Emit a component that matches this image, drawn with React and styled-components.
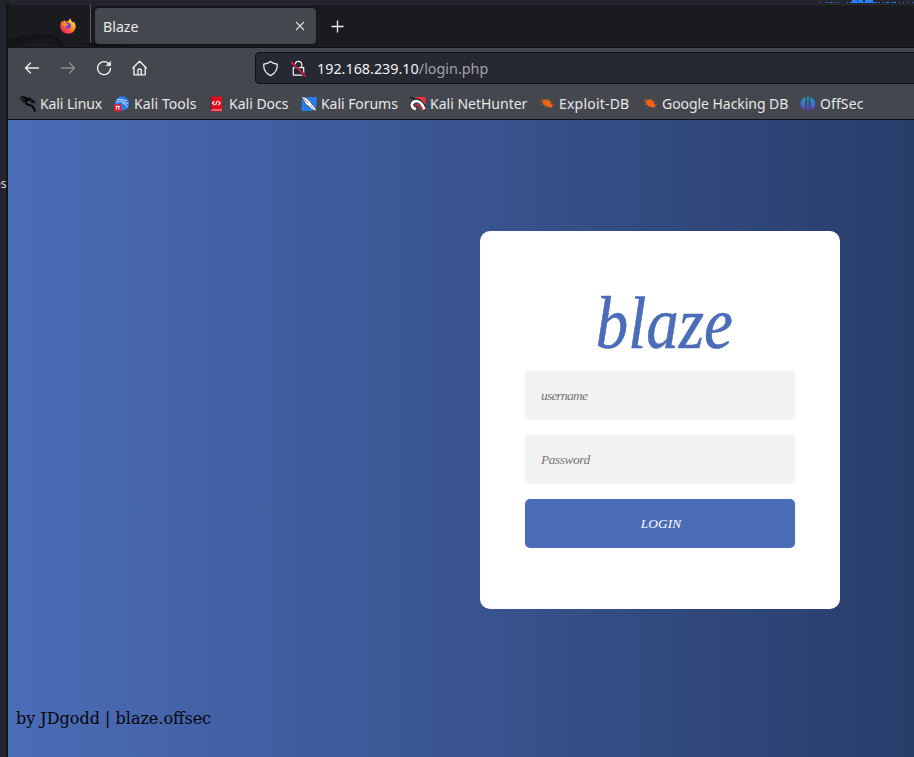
import React from "react";
import styled, { createGlobalStyle } from "styled-components";

const Global = createGlobalStyle`
  * { box-sizing: border-box; }
  body { margin: 0; overflow: hidden; background: #22242d; font-family: "Noto Sans", sans-serif; }
`;

const Desktop = styled.div`
  position: relative;
  width: 914px;
  height: 757px;
  overflow: hidden;
  display: flex;
  padding: 4px 0 0 7px;
  background: linear-gradient(90deg, #23252e 0 5px, #14151a 7px);
`;
const TopStrip = styled.div`
  position: absolute;
  left: 0;
  top: 0;
  width: 914px;
  height: 4px;
  background: linear-gradient(#252630, #202129);
  svg { display: block; }
`;
const Behind = styled.span`
  position: absolute;
  left: -6px;
  top: 176px;
  color: #d8d9dc;
  font: 12px/16px "Noto Sans", sans-serif;
`;
const Window = styled.div`
  position: relative;
  flex: 1;
  min-width: 0;
  display: flex;
  flex-direction: column;
  border-left: 1px solid #101116;
  border-top: 1px solid #2b2c31;
  border-top-left-radius: 6px;
  overflow: hidden;
  background: #1a1b1f;
`;
const TabStrip = styled.div`
  height: 43px;
  flex: none;
  display: flex;
  position: relative;
  border-bottom: 1px solid #121317;
`;
const Pinned = styled.div`
  width: 83px;
  flex: none;
  display: flex;
  align-items: center;
  justify-content: flex-end;
  padding-right: 14px;
  border-right: 1px solid #55575d;
`;
const Backdrop = styled.svg`
  position: absolute;
  left: 0;
  top: 0;
`;
const FoxSvg = styled.svg`
  position: relative;
`;
const Tab = styled.div`
  position: relative;
  width: 221px;
  height: 36px;
  margin: 3px 0 0 4px;
  padding: 0 11px 0 8px;
  border-radius: 4px;
  background: #44474d;
  box-shadow: 0 0 2px #0009;
  display: flex;
  align-items: center;
  justify-content: space-between;
  color: #e8e9e9;
  font-size: 14.2px;
`;
const NewTab = styled.div`
  margin: 14px 0 0 14px;
  height: 15px;
  svg { display: block; }
`;
const NavBar = styled.div`
  height: 40px;
  flex: none;
  display: flex;
  align-items: center;
  background: #44474d;
  padding-left: 15px;
`;
const NavButton = styled.div`
  width: 18px;
  height: 18px;
  margin-right: 18px;
  opacity: ${(p) => (p.$dim ? 0.42 : 1)};
  svg { display: block; }
`;
const UrlBar = styled.div`
  width: 680px;
  flex: none;
  height: 32px;
  margin-left: 88px;
  display: flex;
  align-items: center;
  padding-left: 6px;
  border: 1px solid #101116;
  border-radius: 4px;
  background: #262832;
  font-size: 14.35px;
  color: #f2f2f2;
  svg { flex: none; margin-right: 11px; }
  svg + span { margin-left: -1px; }
`;
const UrlPath = styled.span`
  color: #a2a3a8;
`;
const Bookmarks = styled.div`
  height: 32px;
  flex: none;
  display: flex;
  align-items: center;
  padding: 0 0 0 12px;
  background: #44474d;
  border-bottom: 1px solid #101114;
`;
const Bookmark = styled.div`
  width: ${(p) => p.$width}px;
  flex: none;
  display: flex;
  align-items: center;
  gap: 4px;
  white-space: nowrap;
  color: #e6e7e7;
  font-size: 14px;
  letter-spacing: ${(p) => p.$spacing || 0}px;
  svg { flex: none; }
`;
const Viewport = styled.main`
  flex: 1;
  min-height: 0;
  overflow: hidden;
`;
const Page = styled.div`
  width: 1304px;
  height: 100%;
  display: flex;
  flex-direction: column;
  align-items: center;
  justify-content: space-between;
  padding: 111px 0 26px;
  background: linear-gradient(90deg, #4b6cb7, #182848);
`;
const Card = styled.form`
  width: 360px;
  height: 378px;
  padding: 60px 45px 45px;
  border-radius: 10px;
  background: #fff;
  display: flex;
  flex-direction: column;
  gap: 15px;
  font-family: "Z003", "URW Chancery L", "Liberation Serif", serif;
  font-style: italic;
`;
const Logo = styled.h1`
  margin: 0 0 -15px;
  padding-left: 10px;
  height: 80px;
  font-size: 75px;
  line-height: 64px;
  font-weight: 400;
  text-align: center;
  color: #4b6cb7;
  -webkit-text-stroke: 0.6px #4b6cb7;
  transform: scaleX(0.865);
`;
const Field = styled.input`
  width: 270px;
  height: 49px;
  padding: 0 16px;
  border: 0;
  border-radius: 5px;
  background: #f2f2f2;
  font: inherit;
  font-size: 13.3px;
  letter-spacing: ${(p) => p.$spacing}px;
  &::placeholder { color: #757575; opacity: 1; }
`;
const Submit = styled.button`
  width: 270px;
  height: 49px;
  padding: 0 0 0 2px;
  border: 0;
  border-radius: 5px;
  background: #4b6cb7;
  color: #fff;
  font: inherit;
  font-size: 13.3px;
  letter-spacing: 0.1px;
`;
const Footer = styled.footer`
  align-self: flex-start;
  padding-left: 8px;
  color: #05060a;
  font: 16px/24px "DejaVu Serif", serif;
`;

const Line = ({ size = 18, children }) => (
  <svg width={size} height={size} viewBox="0 0 18 18" fill="none" stroke="#f0f0ee" strokeWidth="1.35" strokeLinecap="round" strokeLinejoin="round">
    {children}
  </svg>
);

const Firefox = () => (
  <FoxSvg width="16" height="16" viewBox="0 0 16 16">
    <defs>
      <linearGradient id="fox" x1="1" y1="0" x2="0.2" y2="1">
        <stop offset="0" stopColor="#fff44f" />
        <stop offset="0.4" stopColor="#ffae20" />
        <stop offset="0.7" stopColor="#ff5634" />
        <stop offset="1" stopColor="#e51a75" />
      </linearGradient>
    </defs>
    <path d="M1.7 3 2.8 4.2 4 1.9 5.4 3.5 7.2 3.5 8.5 2.7 10.4.3 11.4 3 13 4.6 13.7 3.6Q16 6.3 15.7 9C15.1 13.2 12 15.8 8 15.8S.8 13 .3 8.8C.1 6.5.8 4.5 1.7 3Z" fill="url(#fox)" />
    <path d="M5.5 4.7Q8.8 3.4 11 6.4 11.7 9.9 8.6 11.1 5.2 11 4.9 8.1L7 7.1 8.4 6 6.3 5.8Z" fill="#8043d5" />
    <path d="M2.9 6.1Q4.4 4.4 5.9 5.7L8.3 6.2 6.8 7.3 5.2 8.8Z" fill="#ff9c26" />
  </FoxSvg>
);

const KaliIcon = () => (
  <svg width="16" height="16" viewBox="0 0 16 16" fill="none" stroke="#08090b" strokeLinecap="round" strokeLinejoin="round">
    <path d="M.5 1.2 4.2.9 7.6 2.3 11 2.3M.9 3.6 4.6 2.5 8.4 3.2" strokeWidth="1.2" />
    <path d="M2.8 5.6Q5.4 3.9 9 3.8L12.4 4.4 14.6 6.4 11.6 6" strokeWidth="1.5" />
    <path d="M7.8 4C4.4 6 5.6 8.8 9.5 9 12.6 9.4 13.8 11 14.8 14.8" strokeWidth="2.1" />
  </svg>
);
const ToolsIcon = () => (
  <svg width="16" height="16" viewBox="0 0 16 16">
    <circle cx="8.1" cy="7.4" r="7.1" fill="#287cf0" />
    <path d="M2.5 4.2Q6 2.2 9.2 4L13 4.8M2 6.6Q5 4.6 8.2 5.2M8 5.4C7 8 12.5 7 13.6 11.5M9 5.8 14 7.6" fill="none" stroke="#cfe6ff" strokeWidth=".9" />
    <rect x="0" y="8" width="7.3" height="7.6" rx="2.2" fill="#ed1c2d" />
    <path d="M1.7 10.4H5.6M2.6 10V13.5M4.9 10V13.5" stroke="#fff" strokeWidth="1" />
  </svg>
);
const DocsIcon = () => (
  <svg width="16" height="16" viewBox="0 0 16 16">
    <path d="M1.4.5H13V15.4H2.5Q1.2 15.4 1.2 14Z" fill="#db1018" />
    <path d="M1.7 1V14.5" stroke="#263865" strokeWidth="1.1" />
    <path d="M2.2 13.4H13V14.4H2.5" fill="#e9b8bc" />
    <path d="m5.4 5.2-1.9 1.9 1.9 1.9M9.2 5.2l1.9 1.9L9.2 9M8 5.1 6.6 9.1" fill="none" stroke="#fff" strokeWidth="1.1" />
  </svg>
);
const ForumsIcon = () => (
  <svg width="16" height="16" viewBox="0 0 16 16">
    <path d="M1 1H14.7Q16 1 15.9 2.5L15.2 12.8 11 15H2Q.5 15 .5 13.4Z" fill="#267cf4" />
    <path d="M.2.6 5 1.6 9.4 5.6 11.2 8.4 14.2 11.8 15.8 15.5 10.6 13.2 8 10.6 4.8 8.6 2.8 4.6Z" fill="#fff" stroke="#20232b" strokeWidth=".6" />
    <path d="m2.6 2.6 4.8 4.8M9 8.8l3.6 4" stroke="#7c8390" strokeWidth=".8" />
  </svg>
);
const HunterIcon = () => (
  <svg width="16" height="16" viewBox="0 0 16 16">
    <path d="M5 1H15.6L15 12.8 10 8Z" fill="#f0303b" />
    <path d="M.2 1.2 3.5 2.6 9 4.2" fill="none" stroke="#1b1d22" strokeWidth="1.3" />
    <path d="M3.4 12C-.3 7.3 5 3 9.6 5.4 12.6 7 13.4 10 15.4 14" fill="none" stroke="#20232b" strokeWidth="4" />
    <path d="M5.8 13.3C-1 10.5 2 4.6 7.4 5.2 11 5.6 12.6 9 14.6 13.4" fill="none" stroke="#fff" strokeWidth="2.6" />
    <path d="M5 10.2Q7.4 7 9.4 10.6L12.6 14.4" fill="none" stroke="#df2b3c" strokeWidth="1.5" />
  </svg>
);
const ExploitIcon = () => (
  <svg width="16" height="16" viewBox="0 0 16 16">
    <path d="M3.4 4.6 6.4 3.6Q9.4 3.2 11.4 5.6L12.4 8 13.8 9.6 13 11.2Q10.6 12 8 10.8L4 8Z" fill="#ed6516" />
    <path d="m.9 4.4 3.7 1.4M2.4 2.6 5.6 4.6M9.6 2.4l.6 2.2M11.5 6l2.2-.6M4.4 8l-2.3 1M6.8 10 5.4 11.8M12.8 9l2.5-.6" stroke="#cf5d22" strokeWidth=".6" fill="none" />
  </svg>
);
const OffSecIcon = () => (
  <svg width="16" height="16" viewBox="0 0 16 16">
    <defs><linearGradient id="off" x1="0" x2="0" y1="0" y2="1"><stop stopColor="#13a8cb" /><stop offset=".6" stopColor="#4267d7" /><stop offset="1" stopColor="#6e20c6" /></linearGradient></defs>
    <path d="M5.4 1V14.2Q1 12.4.6 8C.5 4.8 2.4 2.4 5.4 1ZM7.2.5H8.7V15.5H7.2ZM10.5 1Q15 3.1 15.3 7.8 15.2 12.3 10.5 14.2Z" fill="url(#off)" />
  </svg>
);

const bookmarks = [
  ["Kali Linux", 94, KaliIcon, -0.1],
  ["Kali Tools", 95, ToolsIcon, 0.1],
  ["Kali Docs", 92, DocsIcon, 0],
  ["Kali Forums", 109, ForumsIcon, -0.05],
  ["Kali NetHunter", 129, HunterIcon, 0],
  ["Exploit-DB", 103, ExploitIcon, 0.2],
  ["Google Hacking DB", 158, ExploitIcon, -0.05],
  ["OffSec", 70, OffSecIcon, 0.1],
];

const specks = [29, 35, 37, 40, 41, 43, 45, 48, 57, 87, 89, 93, 96, 97, 98, 101, 103, 104, 105, 109, 113, 118, 122];

export default function App() {
  return (
    <Desktop>
      <Global />
      <TopStrip>
        <svg width="914" height="4" fill="#2b7df4">
          <path d="M852 0H857V1H858V0H863V2H865V0H873V2H876V3H850V2H852Z" />
          {specks.map((x) => <rect key={x} x={790 + x} y="2" width="1" height="1" />)}
        </svg>
      </TopStrip>
      <Behind>es</Behind>
      <Window>
        <TabStrip>
          <Backdrop width="150" height="43">
            <path d="M0 34Q23 28 49 30L57 43H52L44 34Q24 33 0 41ZM76 38Q104 36 125 43H84Z" fill="#131418" />
            <path d="M0 42Q22 36 43 37L47 42" fill="none" stroke="#15161a" strokeWidth="2" />
          </Backdrop>
          <Pinned><Firefox /></Pinned>
          <Tab>
            Blaze
            <svg width="10" height="10" viewBox="0 0 10 10" stroke="#ddd" strokeWidth="1.1"><path d="m1 1 8 8M9 1 1 9" /></svg>
          </Tab>
          <NewTab><svg width="15" height="15" stroke="#eee" strokeWidth="1.3"><path d="M7.5 1.5V13.5M1.5 7.5H13.5" /></svg></NewTab>
        </TabStrip>
        <NavBar>
          <NavButton><Line><path d="M2.5 9H15.5M7.5 4 2.5 9l5 5" /></Line></NavButton>
          <NavButton $dim><Line><path d="M2.5 9H15.5M10.5 4l5 5-5 5" /></Line></NavButton>
          <NavButton><Line><path d="M15.5 9.5A6.5 6.5 0 1 1 12.7 3.8L15 6" /><path d="M15.7 2.2V6.8H11.1Z" fill="#f0f0ee" strokeWidth=".4" /></Line></NavButton>
          <NavButton><Line><path d="M1.8 9 8.6 2.2 15.4 9M3 8V15.8H14.2V8M6.9 15.5V11.2Q6.9 10 8.6 10T10.3 11.2V15.5" /></Line></NavButton>
          <UrlBar>
            <Line size={17}><path d="M9 1.5Q12 4 16.2 4.3C16.5 10 13.4 14.6 9 16.5 4.6 14.6 1.5 10 1.8 4.3Q6 4 9 1.5Z" /></Line>
            <Line size={17}><path d="M5.5 8V5.5Q5.5 1.5 9 1.5T12.5 5.5V8M3.5 8H14.5V16H3.5Z" /><path d="M2 3 16 17" stroke="#262832" strokeWidth="3" /><path d="m1.5 2.5 15 14.5" stroke="#e21b49" strokeWidth="1.6" /></Line>
            <span>192.168.239.10<UrlPath>/login.php</UrlPath></span>
          </UrlBar>
        </NavBar>
        <Bookmarks>
          {bookmarks.map(([label, width, Icon, spacing]) => (
            <Bookmark key={label} $width={width} $spacing={spacing}><Icon />{label}</Bookmark>
          ))}
        </Bookmarks>
        <Viewport>
          <Page>
            <Card>
              <Logo>blaze</Logo>
              <Field placeholder="username" $spacing={-0.7} />
              <Field placeholder="Password" type="password" $spacing={-0.4} />
              <Submit type="button">LOGIN</Submit>
            </Card>
            <Footer>by JDgodd | blaze.offsec</Footer>
          </Page>
        </Viewport>
      </Window>
    </Desktop>
  );
}
